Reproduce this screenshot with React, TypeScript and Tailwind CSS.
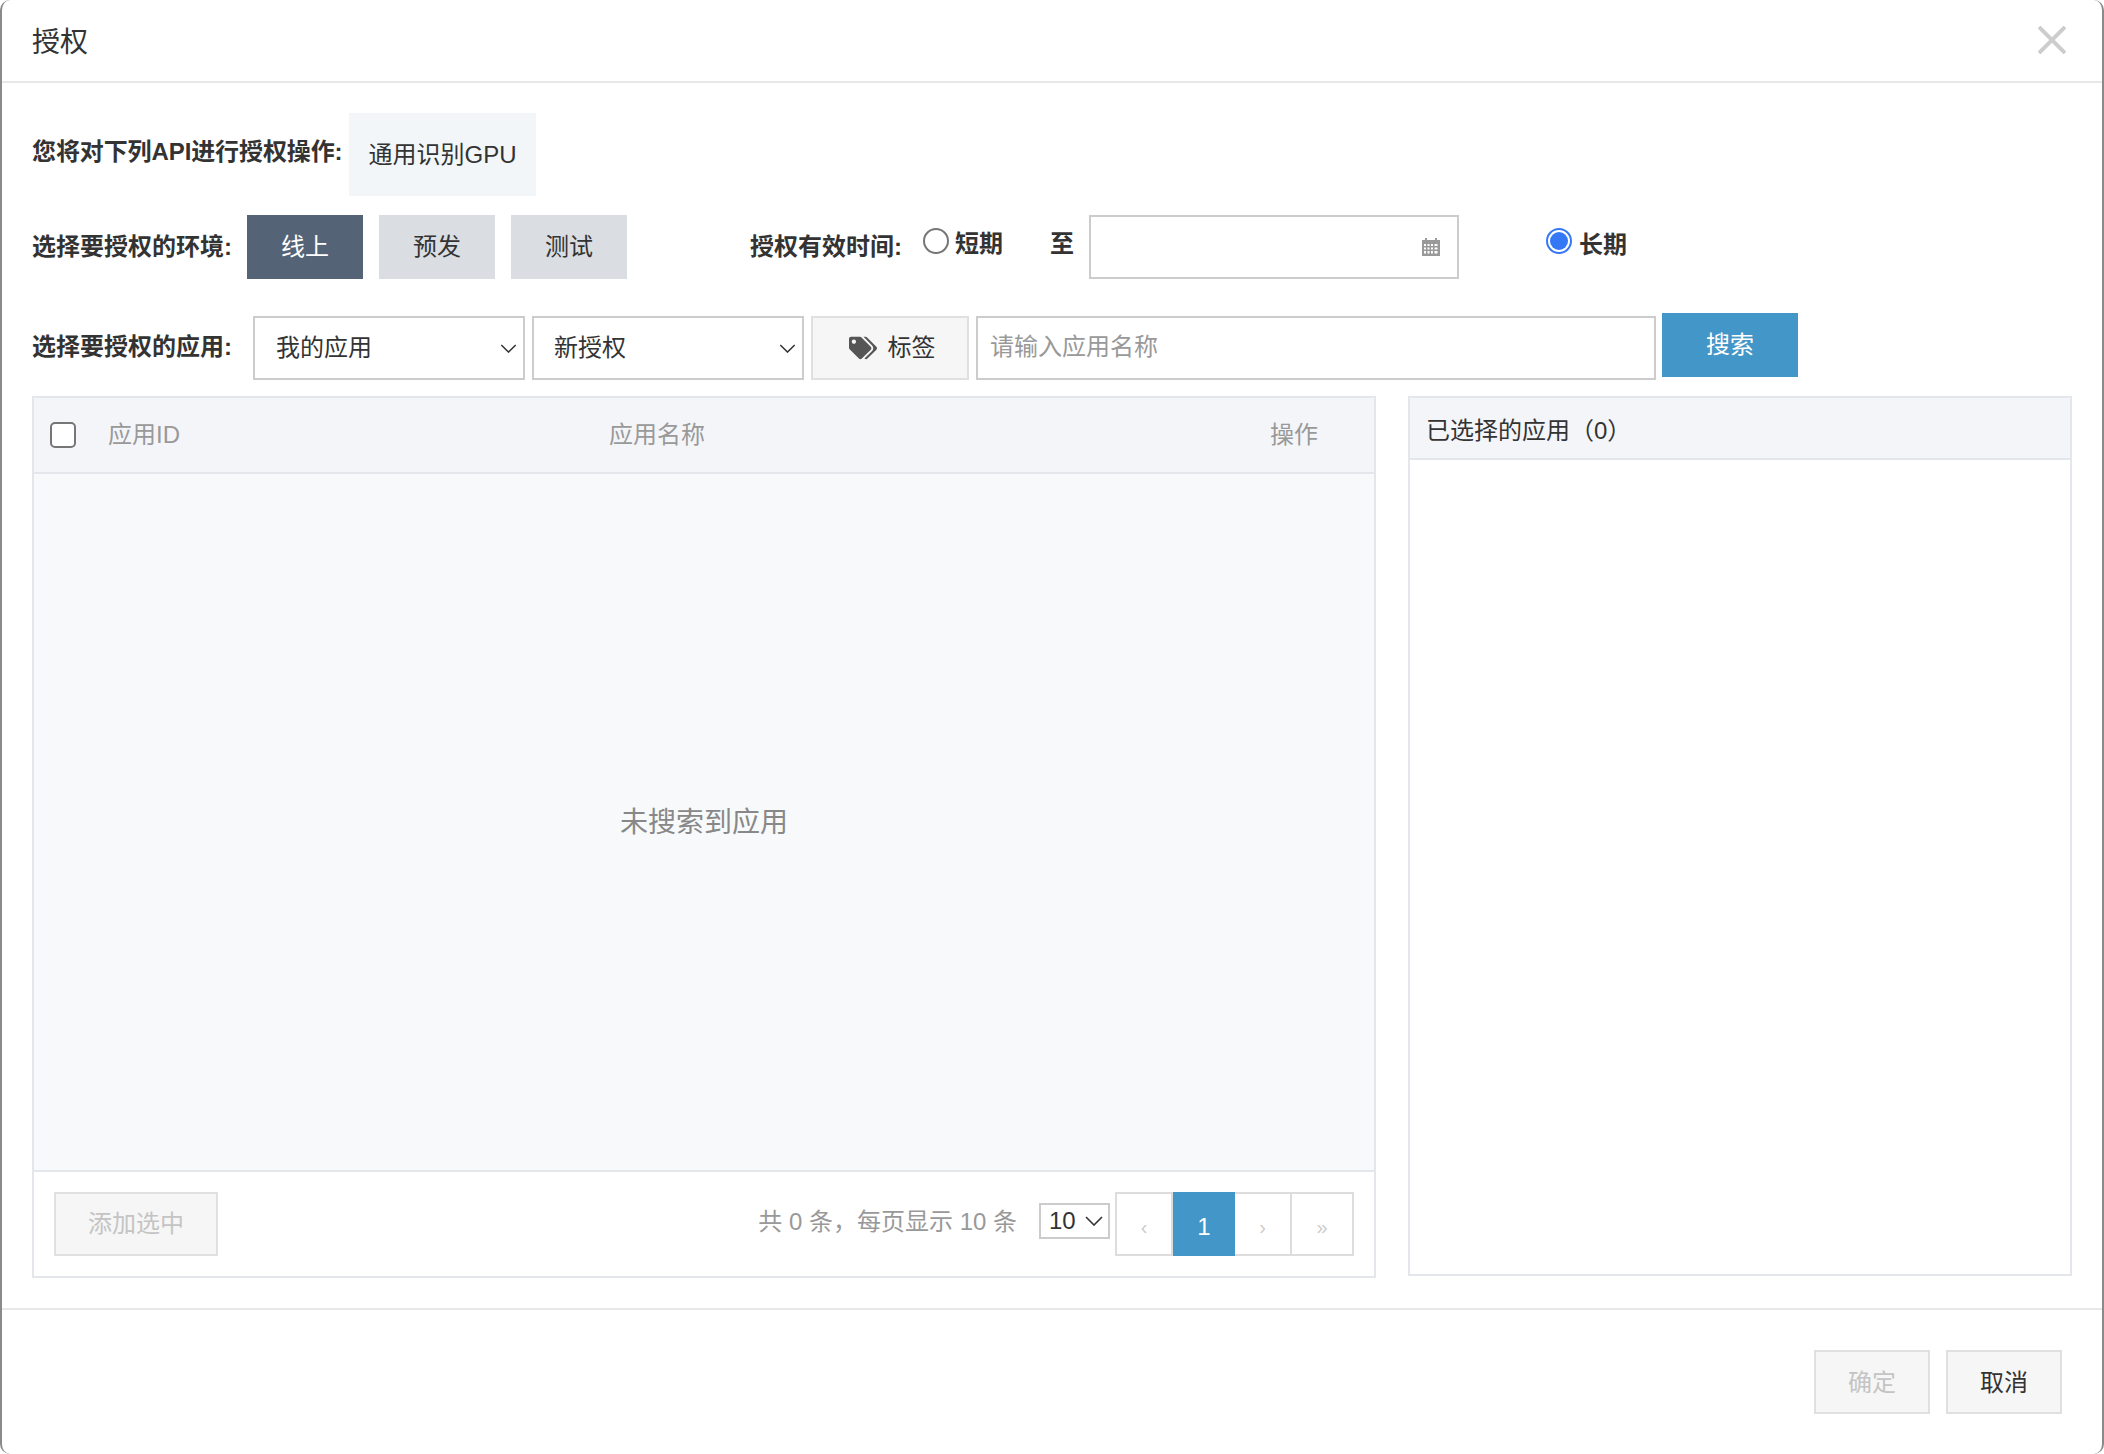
import { FaTags } from "react-icons/fa";

const font = "font-['Liberation_Sans','Noto_Sans_CJK_SC',sans-serif]";

function Chevron({ className }: { className: string }) {
  return (
    <svg viewBox="0 0 18 10" fill="none" stroke="currentColor" strokeWidth="1.6" className={className}>
      <path d="M1 1l8 8 8-8" />
    </svg>
  );
}

function CalendarIcon() {
  return (
    <svg viewBox="0 0 20 20" className="h-5 w-5 text-[#999]" fill="currentColor">
      <path
        fillRule="evenodd"
        d="M1 3h3V1h2v2h8V1h2v2h3v16H1zM3 7v2h2V7zm3.500 0v2h2V7zm3.500 0v2h2V7zm3.500 0v2h3V7zM3 10.500v2h2v-2zm3.500 0v2h2v-2zm3.500 0v2h2v-2zm3.500 0v2h3v-2zM3 14v2.500h2V14zm3.500 0v2.500h2V14zm3.500 0v2.500h2V14zm3.500 0v2.500h3V14z"
      />
    </svg>
  );
}

function Select({ label, w }: { label: string; w: string }) {
  return (
    <div className={`flex h-[64px] items-center justify-between border-2 border-[#ccc] bg-white pr-[6px] text-[#333] ${w}`}>
      <span>{label}</span>
      <Chevron className="h-[9px] w-[17px] text-[#333]" />
    </div>
  );
}

function PageCell({ children, w }: { children: string; w: string }) {
  return (
    <div className={`flex items-center justify-center border-y-2 border-r-2 border-[#ddd] pt-[6px] text-[20px] text-[#ccc] ${w}`}>
      {children}
    </div>
  );
}

export default function App() {
  return (
    <div className={`flex h-[1454px] w-[2104px] flex-col overflow-hidden rounded-[10px] border-x-2 border-[#8a8a8a] bg-white text-[24px] leading-none text-[#333] ${font}`}>
      <header className="flex h-[83px] shrink-0 items-center justify-between border-b-2 border-[#e8e8e8] pl-[30px] pr-[36px]">
        <h1 className="mt-[5px] text-[28px] font-normal">授权</h1>
        <svg viewBox="0 0 28 28" fill="none" stroke="#cdcdcd" strokeWidth="4" className="mb-[1px] h-[28px] w-[28px]">
          <path d="M1 1l26 26M27 1L1 27" />
        </svg>
      </header>

      <main className="flex flex-col px-[30px] pt-[30px]">
        <div className="flex h-[83px] items-start">
          <b className="mt-[27px] w-[317px] tracking-[-0.1px]">您将对下列API进行授权操作:</b>
          <div className="flex h-[83px] w-[187px] items-center justify-center bg-[#f2f6f9] pt-[1px]">通用识别GPU</div>
        </div>

        <div className="mt-[19px] flex h-[64px] items-center">
          <b className="w-[215px]">选择要授权的环境:</b>
          <div className="flex gap-[16px]">
            <button className="h-[64px] w-[116px] bg-[#556377] text-white">线上</button>
            <button className="h-[64px] w-[116px] bg-[#dadde2]">预发</button>
            <button className="h-[64px] w-[116px] bg-[#dadde2]">测试</button>
          </div>
          <b className="ml-[123px] w-[173px]">授权有效时间:</b>
          <div className="flex w-[127px] items-center pb-[6px]">
            <span className="mb-[6px] h-[26px] w-[26px] rounded-full border-2 border-[#767676] bg-white" />
            <b className="ml-[6px]">短期</b>
          </div>
          <b className="w-[39px] pb-[6px]">至</b>
          <div className="flex h-[64px] w-[370px] items-center justify-end border-2 border-[#ccc] pr-[16px]">
            <CalendarIcon />
          </div>
          <div className="ml-[87px] flex items-center pb-[4px]">
            <span className="mb-[8px] flex h-[26px] w-[26px] items-center justify-center rounded-full border-2 border-[#3478f6] bg-white">
              <span className="h-[18px] w-[18px] rounded-full bg-[#3478f6]" />
            </span>
            <b className="ml-[7px]">长期</b>
          </div>
        </div>

        <div className="mt-[34px] flex h-[67px] items-start">
          <b className="mt-[22px] w-[221px]">选择要授权的应用:</b>
          <div className="mt-[3px] flex gap-[7px]">
            <Select label="我的应用" w="w-[272px] pl-[21px]" />
            <Select label="新授权" w="w-[272px] pl-[20px]" />
            <button className="flex h-[64px] w-[158px] items-center justify-center gap-[11px] border-2 border-[#e0e0e0] bg-[#f6f6f6] pl-[4px]">
              <FaTags className="h-[24px] w-[28px] text-[#555]" />
              标签
            </button>
            <input
              placeholder="请输入应用名称"
              className="h-[64px] w-[680px] border-2 border-[#ccc] bg-white px-[12px] pb-[2px] placeholder:text-[#999]"
            />
          </div>
          <button className="ml-[6px] h-[64px] w-[136px] bg-[#4396c8] text-white">搜索</button>
        </div>

        <div className="mt-[16px] flex items-start gap-[32px]">
          <section className="flex h-[882px] w-[1344px] flex-col border-2 border-[#e3e7ec]">
            <div className="flex h-[76px] shrink-0 items-center border-b-2 border-[#e3e7ec] bg-[#f4f5f9] text-[#999]">
              <span className="ml-[16px] h-[26px] w-[26px] rounded-[5px] border-2 border-[#767676] bg-white" />
              <span className="ml-[32px] w-[501px]">应用ID</span>
              <span className="w-[661px]">应用名称</span>
              <span>操作</span>
            </div>
            <div className="flex flex-1 items-center justify-center bg-[#f7f9fb] pt-[2px] text-[28px] text-[#888]">未搜索到应用</div>
            <div className="flex h-[106px] shrink-0 items-center justify-between border-t-2 border-[#e3e7ec] px-[20px]">
              <button className="h-[64px] w-[164px] border-2 border-[#e0e0e0] bg-[#f6f6f6] text-[#c4c4c4]">添加选中</button>
              <div className="flex items-center">
                <span className="pb-[4px] text-[#999]">共 0 条，每页显示 10 条</span>
                <div className="ml-[22px] mb-[6px] flex h-[36px] w-[71px] items-center justify-between border-2 border-[#ccc] pl-[8px] pr-[5px]">
                  <span>10</span>
                  <Chevron className="h-[10px] w-[18px] text-[#333]" />
                </div>
                <div className="ml-[5px] flex h-[64px]">
                  <PageCell w="w-[58px] border-l-2">‹</PageCell>
                  <div className="flex w-[62px] items-center justify-center bg-[#4396c8] pt-[6px] text-white">1</div>
                  <PageCell w="w-[57px]">›</PageCell>
                  <PageCell w="w-[62px]">»</PageCell>
                </div>
              </div>
            </div>
          </section>

          <section className="h-[880px] w-[664px] border-2 border-[#e3e7ec]">
            <div className="flex h-[62px] items-center border-b-2 border-[#e3e7ec] bg-[#f4f5f9] pl-[16px] pt-[5px]">已选择的应用（0）</div>
          </section>
        </div>
      </main>

      <footer className="mt-[30px] flex flex-1 items-start justify-end gap-[16px] border-t-2 border-[#e8e8e8] pr-[40px] pt-[40px]">
        <button className="h-[64px] w-[116px] border-2 border-[#e0e0e0] bg-[#f6f6f6] pt-[1px] text-[#c4c4c4]">确定</button>
        <button className="h-[64px] w-[116px] border-2 border-[#e0e0e0] bg-[#f6f6f6] pt-[1px]">取消</button>
      </footer>
    </div>
  );
}
